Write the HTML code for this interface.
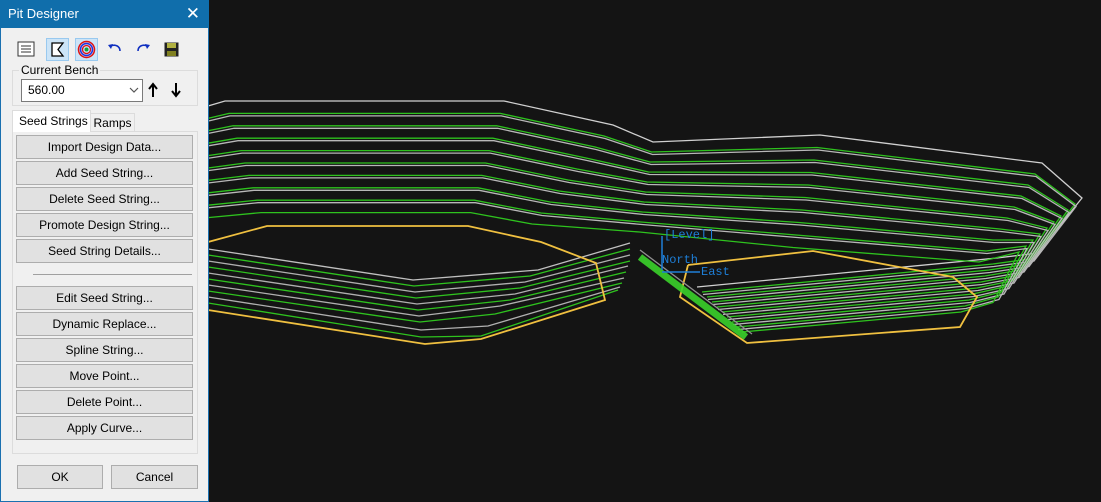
<!DOCTYPE html>
<html><head><style>
*{box-sizing:border-box;margin:0;padding:0}
body{width:1101px;height:502px;background:#141414;position:relative;overflow:hidden;font-family:"Liberation Sans",sans-serif;font-size:12px;color:#000}
#panel{position:absolute;left:0;top:0;width:209px;height:502px;background:#f0f0f0;border:1px solid #1a70b0;border-top:none}
#title{position:absolute;left:-1px;top:0;width:209px;height:28px;background:#106eab;color:#fff;font-size:13px;line-height:27px;padding-left:8px}
#title .x{position:absolute;right:9px;top:0;font-size:17px}
.ab{position:absolute}
.tb{position:absolute;top:38px;width:23px;height:23px}
.tb.on{background:#cce4f7;border:1px solid #99c9ef}
.btn{position:absolute;left:15px;width:177px;height:24px;background:#e1e1e1;border:1px solid #adadad;text-align:center;line-height:22px}
</style></head><body>
<svg id="cv" class="ab" style="left:0;top:0" width="1101" height="502">
<g id="gen" fill="none" stroke-width="1.3"></g>
<g fill="none" stroke-width="1.3">
<polyline points="208,249 413,280 538,270 630,243" stroke="#c0c0c0"/>
<polyline points="208,255 414,286 530,276 630,249" stroke="#2ec21e"/>
<polyline points="208,261 415,292 525,282 630,255" stroke="#b0b0b0"/>
<polyline points="208,267 416,298 520,288 630,261" stroke="#2ec21e"/>
<polyline points="208,273 417,304 515,294 628,266" stroke="#b0b0b0"/>
<polyline points="208,279 418,310 510,300 626,272" stroke="#2ec21e"/>
<polyline points="208,285 419,316 500,306 624,278" stroke="#b0b0b0"/>
<polyline points="208,291 420,322 495,314 622,283" stroke="#2ec21e"/>
<polyline points="208,297 421,330 488,326 620,287" stroke="#b0b0b0"/>
<polyline points="208,303 421,337 481,336 618,290" stroke="#2ec21e"/>
<polyline points="208,242 267,226 468,226 541,242 596,263 605,300 481,339 425,344 208,310" stroke="#f0c040" stroke-width="1.8"/>
<polyline points="688,265 813,251 953,277 977,297 960,327 747,343 680,297 688,265" stroke="#f0c040" stroke-width="1.8"/>
<line x1="640" y1="257" x2="746" y2="337" stroke="#3ad22a" stroke-width="7" opacity="0.9"/>
<line x1="640" y1="250" x2="752" y2="334" stroke="#909090" stroke-width="1.3"/>
</g>
<g stroke="#1e7fd8" stroke-width="1.5" fill="#1e7fd8">
<line x1="662" y1="270" x2="662" y2="236"/>
<line x1="662" y1="272" x2="700" y2="272"/>
</g>
<g font-family="Liberation Mono,monospace" font-size="12" fill="#1e7fd8">
<text x="664" y="238">[Level]</text>
<text x="662" y="263">North</text>
<text x="701" y="275">East</text>
</g>
</svg>
<script>
(function(){
var g=document.getElementById('gen'),h='';
function pl(p,c){h+='<polyline points="'+p.map(function(a){return a[0].toFixed(1)+','+a[1].toFixed(1)}).join(' ')+'" stroke="'+c+'"/>';}
for(var k=0;k<10;k++){
 var y=101+12.4*k;
 var pts=[[208,106+12.4*k],[225+4*k,y],[504-3.7*k,y],[613-9*k,125+11*k],[653-1.5*k,142+10*k],
 [820-3*k,135+12.5*k],[1042-7*k,163+11*k],[1082-7*k,198+6*k],[1038-5*k,253+5.5*k],[997-4*k,258+6*k],[697+5*k,287+5*k]];
 if(k==0){pl(pts,'#d0d0d0');}
 else{
  pl(pts,'#2ec21e');
  if(k<9) pl(pts.map(function(a){return [a[0]+1,a[1]+2.5]}),'#b8b8b8');
 }
}
g.innerHTML=h;
})();
</script>
<div id="panel">
<div id="title">Pit Designer<span class="x">✕</span></div>
<svg class="ab" style="left:16px;top:41px" width="18" height="16"><rect x="1" y="1" width="16" height="14" fill="#fff" stroke="#333"/><g stroke="#333"><line x1="4" y1="5" x2="14" y2="5"/><line x1="4" y1="8" x2="14" y2="8"/><line x1="4" y1="11" x2="14" y2="11"/></g></svg>
<div class="tb on" style="left:45px"><svg width="21" height="21"><path d="M5 4H16L11 10.5 16 17H5Z" fill="#fff" stroke="#000" stroke-width="1.3"/></svg></div>
<div class="tb on" style="left:74px"><svg width="21" height="21"><circle cx="10.5" cy="10.5" r="8" fill="none" stroke="#e01010" stroke-width="1.5"/><circle cx="10.5" cy="10.5" r="6" fill="none" stroke="#2030e0" stroke-width="1.5"/><circle cx="10.5" cy="10.5" r="4" fill="none" stroke="#e01010" stroke-width="1.3"/><circle cx="10.5" cy="10.5" r="2" fill="#10a040"/></svg></div>
<svg class="ab" style="left:106px;top:43px" width="16" height="12"><path d="M4 3C8 1 13 3 13 8" fill="none" stroke="#1030c0" stroke-width="1.6"/><path d="M1 2L6 1 4 6Z" fill="#1030c0"/></svg>
<svg class="ab" style="left:134px;top:43px" width="16" height="12"><path d="M12 3C8 1 3 3 3 8" fill="none" stroke="#1030c0" stroke-width="1.6"/><path d="M15 2L10 1 12 6Z" fill="#1030c0"/></svg>
<svg class="ab" style="left:163px;top:42px" width="15" height="15"><rect x="0.5" y="0.5" width="14" height="14" fill="#222"/><rect x="3" y="1" width="9" height="5" fill="#b0b040"/><rect x="3" y="9" width="9" height="5" fill="#808020"/></svg>
<div class="ab" style="left:11px;top:70px;width:186px;height:36px;border:1px solid #dcdcdc"></div>
<div class="ab" style="left:18px;top:63px;background:#f0f0f0;padding:0 2px">Current Bench</div>
<div class="ab" style="left:20px;top:79px;width:122px;height:23px;background:#fff;border:1px solid #7a7a7a;line-height:21px;padding-left:6px">560.00</div>
<svg class="ab" style="left:128px;top:87px" width="10" height="6"><path d="M1 1L5 5 9 1" fill="none" stroke="#555" stroke-width="1.2"/></svg>
<svg class="ab" style="left:146px;top:82px" width="12" height="16"><path d="M6 15V3M2 7L6 2 10 7" fill="none" stroke="#000" stroke-width="2"/></svg>
<svg class="ab" style="left:169px;top:82px" width="12" height="16"><path d="M6 1V13M2 9L6 14 10 9" fill="none" stroke="#000" stroke-width="2"/></svg>
<div class="ab" style="left:11px;top:131px;width:186px;height:323px;border:1px solid #dcdcdc;background:#f0f0f0"></div>
<div class="ab" style="left:11px;top:110px;width:79px;height:22px;background:#fff;border:1px solid #dcdcdc;border-bottom:none;line-height:20px;padding-left:6px">Seed Strings</div>
<div class="ab" style="left:89px;top:113px;width:45px;height:18px;background:#f0f0f0;border:1px solid #dcdcdc;border-bottom:none;line-height:18px;text-align:center">Ramps</div>
<div class="btn" style="top:135px">Import Design Data...</div>
<div class="btn" style="top:161px">Add Seed String...</div>
<div class="btn" style="top:187px">Delete Seed String...</div>
<div class="btn" style="top:213px">Promote Design String...</div>
<div class="btn" style="top:239px">Seed String Details...</div>
<div class="ab" style="left:32px;top:274px;width:159px;border-top:1px solid #a0a0a0"></div>
<div class="btn" style="top:286px">Edit Seed String...</div>
<div class="btn" style="top:312px">Dynamic Replace...</div>
<div class="btn" style="top:338px">Spline String...</div>
<div class="btn" style="top:364px">Move Point...</div>
<div class="btn" style="top:390px">Delete Point...</div>
<div class="btn" style="top:416px">Apply Curve...</div>
<div class="btn" style="top:465px;left:16px;width:86px">OK</div>
<div class="btn" style="top:465px;left:110px;width:87px">Cancel</div>
</div>
</body></html>
